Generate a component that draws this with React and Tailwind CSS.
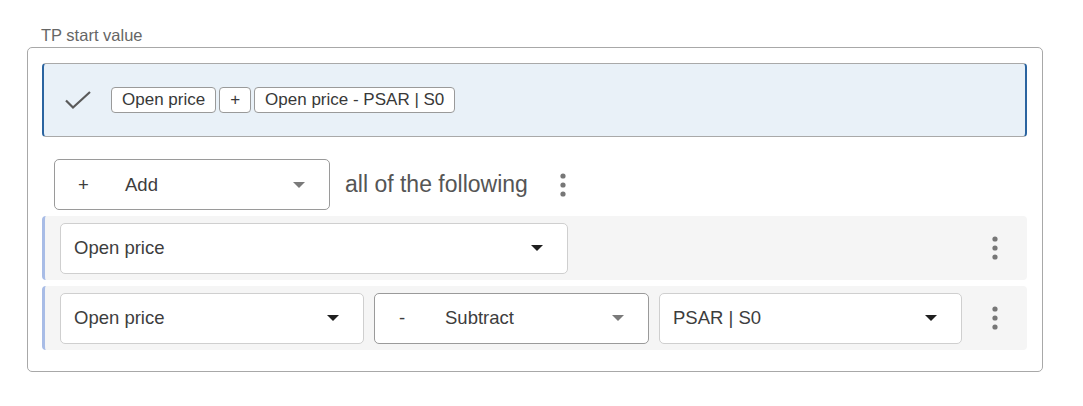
import React from 'react';

const font = { fontFamily: '"Liberation Sans", Arial, sans-serif' };

const Caret = ({ light }) => (
  <svg width="14" height="8" viewBox="0 0 14 8" className="shrink-0">
    <path d="M1 1 L13 1 L7 7 Z" fill={light ? '#7a7a7a' : '#1f1f1f'} />
  </svg>
);

const Kebab = () => (
  <svg width="6" height="24" viewBox="0 0 6 24">
    <circle cx="3" cy="3" r="2.6" fill="#777" />
    <circle cx="3" cy="12" r="2.6" fill="#777" />
    <circle cx="3" cy="21" r="2.6" fill="#777" />
  </svg>
);

const Select = ({ width, children, light, dark }) => (
  <div
    className={`flex items-center h-[51px] bg-white rounded-[5px] border pl-[13px] pr-[23px] ${
      dark ? 'border-[#9a9a9a]' : 'border-[#cfcfcf]'
    }`}
    style={{ width }}
  >
    <div className="flex-1 flex items-center text-[18.5px] text-[#3d3d3d]">{children}</div>
    <Caret light={light} />
  </div>
);

const Chip = ({ children }) => (
  <span className="h-[26px] px-[10px] flex items-center border border-[#9a9a9a] rounded-[4px] bg-white text-[17px] text-[#383838]">
    {children}
  </span>
);

export default function App() {
  return (
    <div className="bg-white w-[1083px] h-[406px] pt-[25px] pl-[27px]" style={font}>
      <div className="pl-[14px] text-[16.5px] leading-[20px] text-[#666] mb-[2px]">TP start value</div>
      <div className="w-[1016px] h-[325px] border border-[#a8a8a8] rounded-[5px] pt-[15px] pl-[14px] pr-[15px]">
        {/* formula preview */}
        <div className="h-[74px] flex items-center bg-[#e9f1f8] border border-[#a9a9a9] border-l-2 border-l-[#2b64a0] border-r-2 border-r-[#2b64a0] rounded-[4px] pl-[20px]">
          <svg width="28" height="20" viewBox="0 0 28 20" className="mr-[19px]">
            <path d="M2 10.5 L9 17.5 L26 2" fill="none" stroke="#5a5a5a" strokeWidth="2.2" />
          </svg>
          <div className="flex items-center gap-[3px]">
            <Chip>Open price</Chip>
            <Chip>+</Chip>
            <Chip>Open price - PSAR | S0</Chip>
          </div>
        </div>

        {/* add row */}
        <div className="flex items-center mt-[22px] ml-[12px]">
          <div className="flex items-center h-[51px] w-[276px] bg-white rounded-[5px] border border-[#9a9a9a] pl-[23px] pr-[23px]">
            <span className="text-[18.5px] text-[#3d3d3d] w-[47px]">+</span>
            <span className="flex-1 text-[18.5px] text-[#3d3d3d]">Add</span>
            <Caret light />
          </div>
          <span className="ml-[15px] text-[23px] text-[#555]">all of the following</span>
          <span className="ml-[32px] flex items-center">
            <Kebab />
          </span>
        </div>

        {/* condition rows */}
        <div className="mt-[6px] flex flex-col gap-[6px]">
          <div className="h-[64px] flex items-center bg-[#f5f5f5] border-l-[3px] border-l-[#a8bce6] rounded-[4px] pl-[15px] pr-[29px]">
            <Select width={508}>Open price</Select>
            <div className="flex-1" />
            <Kebab />
          </div>
          <div className="h-[64px] flex items-center bg-[#f5f5f5] border-l-[3px] border-l-[#a8bce6] rounded-[4px] pl-[15px] pr-[29px]">
            <div className="flex items-center gap-[10px]">
              <Select width={304}>Open price</Select>
              <Select width={275} light dark>
                <span className="w-[10px] ml-[11px]">-</span>
                <span className="ml-[36px]">Subtract</span>
              </Select>
              <Select width={303}>PSAR | S0</Select>
            </div>
            <div className="flex-1" />
            <Kebab />
          </div>
        </div>
      </div>
    </div>
  );
}
